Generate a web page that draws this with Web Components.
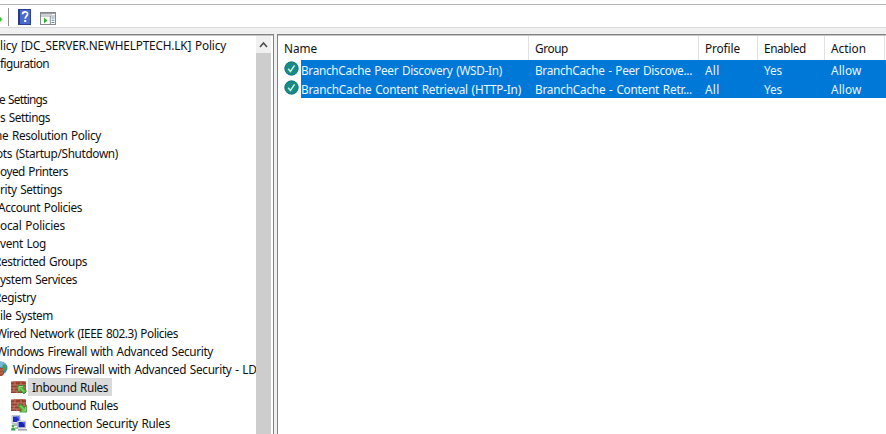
<!DOCTYPE html>
<html lang="en"><head><meta charset="utf-8"><title>Group Policy Management Editor</title>
<style>
html,body{margin:0;height:434px;overflow:hidden;background:#f0f0f0}
body{font:12px/18px "Noto Sans","Open Sans",sans-serif;color:#101010}
</style></head><body>
<policy-editor></policy-editor>
<script>
const define=(name,css,html,ready)=>customElements.define(name,class extends HTMLElement{
  constructor(){super();this.attachShadow({mode:'open'}).innerHTML=`<style>${css}</style>${html}`}
  connectedCallback(){if(ready)ready.call(this,this.shadowRoot)}
});

/* One line of text, spaced to the advance width given in "w". */
define('fit-text',':host{display:inline-block;white-space:pre;flex:none}span{display:inline-block;font-size:11.8px;word-spacing:.9px}','<span></span>',function(r){
  const s=r.querySelector('span'),w=+this.getAttribute('w');
  s.textContent=this.getAttribute('text');
  const n=s.getBoundingClientRect().width;
  s.style.letterSpacing=((w-n)/s.textContent.length)+'px';
});

/* Checkerboard dither of the selected rule icon, one dashed line per pixel row. */
const dither=Array.from({length:13},(_,i)=>{
  const y=i+1.5,h=Math.sqrt(49-(y-7.5)**2),a=Math.ceil(7.5-h),b=Math.floor(7.5+h),s=a+((a+i)%2);
  return `<path d="M${s} ${y}H${b}" stroke="#1679b4" stroke-dasharray="1 1"/>`;
}).join('');

const icons={
help:`<svg width="13" height="16" viewBox="0 0 13 16"><rect width="13" height="16" fill="#2d4190"/><rect x="2" y="1" width="10" height="14" fill="#486bd0"/><path d="M1 1v14" stroke="#263477"/><path d="M4.6 5.2c0-3.2 5-3.2 5-.1 0 2-2.4 2-2.4 4.7" fill="none" stroke="#fff" stroke-width="1.7"/><rect x="6.2" y="11" width="2" height="2" fill="#fff"/></svg>`,
pane:`<svg width="16" height="13" viewBox="0 0 16 13"><rect x=".5" y=".5" width="15" height="12" fill="#fff" stroke="#858891"/><path d="M1 1.5h14M1 4h14" stroke="#9a9ca4"/><path d="M1 2.7h11" stroke="#c8c9d0"/><path d="M10.3 4v8" stroke="#8c8e96"/><path d="M4 5.5v6l3.5-3z" fill="#39b32c"/><path d="M11.5 6h3M11.5 8.3h3M11.5 10.5h3" stroke="#5b8cc2"/></svg>`,
arrow:`<svg width="3" height="7" viewBox="0 0 3 7"><path d="M0 1.2l2 2.2-2 2.2z" fill="#42bd38" stroke="#42bd38" stroke-width=".7"/></svg>`,
check:`<svg width="15" height="15" viewBox="0 0 15 15"><circle cx="7.5" cy="7.5" r="7" fill="#17936f"/><g opacity=".6">${dither}</g><circle cx="7.5" cy="7.5" r="6.6" fill="none" stroke="#167689" stroke-width=".8"/><path d="M4.2 7.8l2.2 2.6 4.2-6" fill="none" stroke="#c9f3ee" stroke-width="1.5"/></svg>`,
globe:`<svg width="8" height="16" viewBox="0 0 8 16"><circle cx="1" cy="7" r="6.5" fill="#398abd"/><path d="M0 1c3-1 5 1 6 3L4 7 0 6z" fill="#74bad6"/><path d="M3 3l3 1 1 4-3 2-2-3z" fill="#4c9a60"/><path d="M0 7h3v3h1v3l-2 2H0z" fill="#a54831"/><path d="M0 9h3M0 12h3" stroke="#d79a7e" stroke-width=".6"/></svg>`,
wall:up=>`<svg width="16" height="14" viewBox="0 0 16 14"><path d="M0 1l11-1 4 1v11H0z" fill="#98402e"/><path d="M0 4h15M0 7h15M0 10h15M4 1v3M10 1v3M7 4v3M13 4v3M3 7v3M10 7v3M6 10v2" stroke="#d19a86" stroke-width=".7"/><path d="M0 1l11-1 4 1" stroke="#bb6b57" fill="none"/><g ${up?'':'transform="rotate(180 11.3 8.8)"'}><path d="M7 4.5h7l-2 2 3.6 3.6-2.7 2.8-3.6-3.6L7 11.5z" fill="#55b53b" stroke="#2f812a" stroke-width=".7"/><path d="M8 5.6h4M8 5.6v4M9 6.6l4 4" stroke="#a6e17f" stroke-width=".9" fill="none"/></g></svg>`,
net:`<svg width="16" height="16" viewBox="0 0 16 16"><path d="M1 .5h8v8H1z" fill="#e1e5ec" stroke="#a7aebb" stroke-width=".7"/><path d="M2 1.5h6.3V7H2z" fill="#202fc2"/><path d="M5 1.5h3.3V5z" fill="#5368e8"/><path d="M3 9h5v2H3z" fill="#b3b8c2"/><path d="M6.5 6h8v7h-8z" fill="#e1e5ec" stroke="#a7aebb" stroke-width=".7"/><path d="M7.5 7h6.3v5.2H7.5z" fill="#1724b7"/><path d="M11 7h2.8v3z" fill="#5266e0"/><path d="M7 14h9v1.6H7z" fill="#a2a8b6"/><circle cx="2" cy="11" r="1.4" fill="#4ab346"/><path d="M0 15.5q0-3 2.2-3t2.3 3z" fill="#3c9f50"/><path d="M4 13h3" stroke="#3fa34b"/></svg>`
};
icons.inbound=icons.wall(true);icons.outbound=icons.wall(false);
define('mmc-icon',':host{display:block;flex:none;line-height:0}svg{display:block}','',function(r){r.innerHTML+=icons[this.getAttribute('name')]});

define('tool-bar',`:host{display:flex;box-sizing:border-box;height:28px;background:#fff;border-bottom:1px solid #d9d9d9;padding-top:4px}
.b{display:flex;flex:1;border-top:1px solid #b5b5b5}i{width:1px;height:18px;background:#929292;margin:3px 9px 0 5px}
.a{margin-top:11px}.h{margin-top:4px}.p{margin:7px 0 0 9px}`,
`<div class="b"><mmc-icon class="a" name="arrow"></mmc-icon><i></i><mmc-icon class="h" name="help"></mmc-icon><mmc-icon class="p" name="pane"></mmc-icon></div>`);

define('tree-item',`:host{display:flex;height:18px;overflow:hidden}
.l{display:flex;height:18px;box-sizing:border-box}.sel{background:#d9d9d9;padding:0 4px;margin-left:-4px}`,'',function(r){
  const g=k=>this.getAttribute(k),x=+g('x'),ic=g('icon');
  const iw={globe:8,inbound:16,outbound:16,net:16}[ic]||0,ix=ic==='globe'?0:11,top={globe:1,inbound:3,outbound:3,net:1}[ic];
  const lead=ic?`<mmc-icon name="${ic}" style="margin:${top}px ${x-ix-iw}px 0 ${ix}px"></mmc-icon>`:'';
  r.innerHTML+=`${lead}<div class="l ${g('sel')?'sel':''}" style="${ic?'':`margin-left:${x}px`}"><fit-text w="${g('w')}" text="${g('text')}"></fit-text></div>`;
});
const rows=[['licy [DC_SERVER.NEWHELPTECH.LK] Policy',0,226],['figuration',0,49],null,['e Settings',-1,48],['s Settings',0,50],['ne Resolution Policy',-5,106],['ots (Startup/Shutdown)',-4,122],['oyed Printers',0,68],['rity Settings',0,62],['Account Policies',-2,84],['ocal Policies',0,65],['vent Log',0,46],['Restricted Groups',-6,93],['ystem Services',0,77],['Registry',-6,42],['ile System',0,53],['Wired Network (IEEE 802.3) Policies',-4,182],['Windows Firewall with Advanced Security',-4,217],['Windows Firewall with Advanced Security - LD',13,243.5,'globe'],['Inbound Rules',32,76,'inbound',1],['Outbound Rules',32,86,'outbound'],['Connection Security Rules',32,138,'net']];
define('tree-view',`:host{display:flex;box-sizing:border-box;width:274px;height:400px;background:#fff;border-top:1px solid #828282;border-right:1px solid #828282;box-shadow:inset 0 1px #c4c4c4}
.t{width:256px;padding-top:1px;overflow:hidden;flex:none}.s{width:15px;margin-top:1px;background:#cdcdcd;flex:none}.u{height:17px;background:#f0f0f0}svg{display:block}.e{height:18px}`,
`<div class="t">${rows.map(a=>a?`<tree-item text="${a[0]}" x="${a[1]}" w="${a[2]}" ${a[3]?`icon="${a[3]}"`:''} ${a[4]?'sel="1"':''}></tree-item>`:'<div class="e"></div>').join('')}</div><div class="s"><div class="u"><svg width="15" height="17"><path d="M4 11l3.5-4 3.5 4" fill="none" stroke="#505050" stroke-width="1.7"/></svg></div></div>`);

const grid='grid-template-columns:251px 170px 59px 67px 60px 1fr';
define('list-header',`:host{display:grid;${grid};height:25px;box-sizing:border-box;padding-top:1px}div{padding:3px 0 0 6px;border-right:1px solid #e2e2e2;box-sizing:border-box}div:first-child{padding-left:7px}`,
[['Name',33],['Group',33],['Profile',35],['Enabled',42],['Action',35]].map(a=>`<div><fit-text text="${a[0]}" w="${a[1]}"></fit-text></div>`).join(''));
define('rule-row',`:host{display:grid;${grid};height:19px;color:#e8f6ff;background:linear-gradient(90deg,#fff 23px,#0078d7 23px)}
div{padding:1px 0 0 6px;box-sizing:border-box;height:19px}.n{display:flex;padding:0 0 0 6px}.n fit-text{padding:1px 0 0 2px}mmc-icon{margin-top:1px}`,'',function(r){
  const t=(s,w)=>`<fit-text text="${s}" w="${w}"></fit-text>`;
  r.innerHTML+=`<div class="n"><mmc-icon name="check"></mmc-icon>${t(this.getAttribute('name'),this.getAttribute('nw'))}</div><div>${t(this.getAttribute('group'),157)}</div><div>${t('All',14.5)}</div><div>${t('Yes',18)}</div><div>${t('Allow',30.5)}</div>`;
});
define('rule-list',`:host{display:block;box-sizing:border-box;width:609px;height:400px;background:#fff;border-top:1px solid #828282;border-left:1px solid #828282;box-shadow:inset 0 1px #c4c4c4}`,
`<list-header></list-header><rule-row name="BranchCache Peer Discovery (WSD-In)" nw="201" group="BranchCache - Peer Discove..."></rule-row><rule-row name="BranchCache Content Retrieval (HTTP-In)" nw="220" group="BranchCache - Content Retr..."></rule-row>`);
define('policy-editor',':host{display:flex;flex-direction:column;width:886px;height:434px;background:#f0f0f0;gap:6px}.m{display:flex;gap:3px}',
'<tool-bar></tool-bar><div class="m"><tree-view></tree-view><rule-list></rule-list></div>');
</script></body></html>
